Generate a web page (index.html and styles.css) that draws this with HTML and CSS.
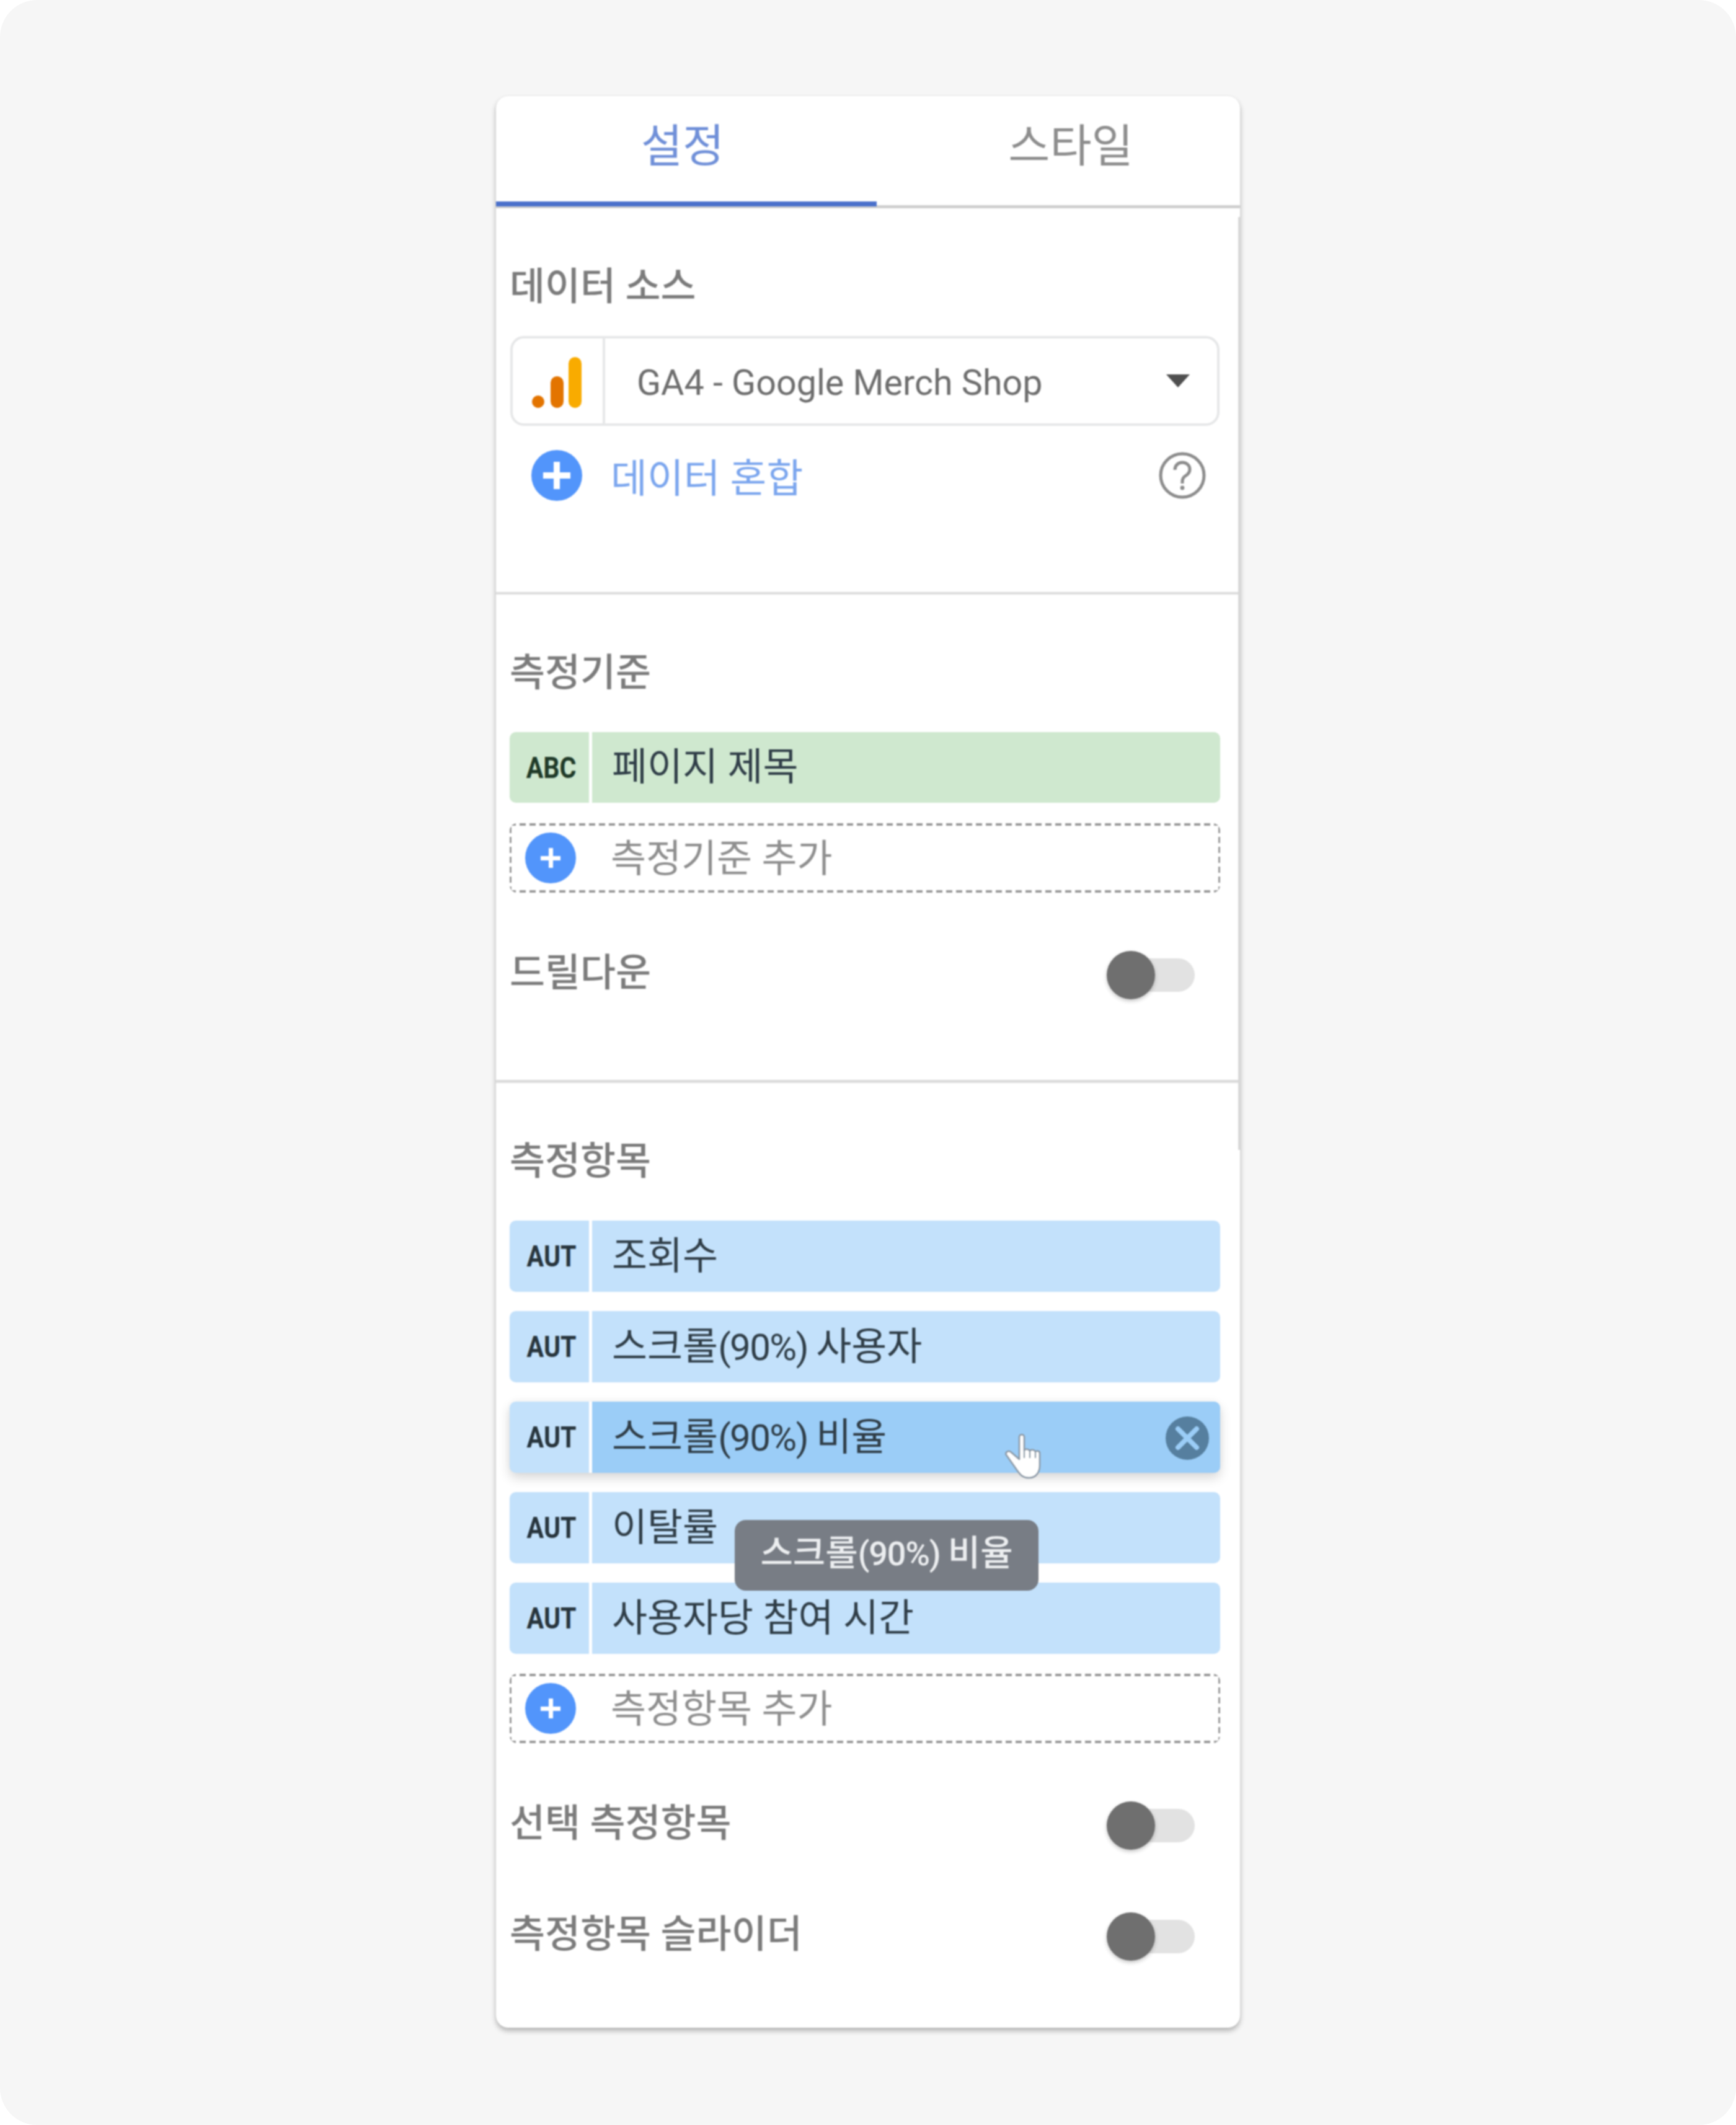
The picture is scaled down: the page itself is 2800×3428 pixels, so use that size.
FILE: index.html
```html
<!DOCTYPE html>
<html lang="ko">
<head>
<meta charset="utf-8">
<title>차트 설정</title>
<link rel="stylesheet" href="styles.css">
</head>
<body>
<main class="frame">
  <div class="card">
    <nav class="tabs">
      <div class="tab tab-active">설정</div>
      <div class="tab tab-idle">스타일</div>
    </nav>
    <div class="panel">
      <section class="section section-source">
        <h2 class="label label-first">데이터 소스</h2>
        <div class="select">
          <div class="select-icon">
            <svg class="ga-logo" viewBox="0 0 80 82" width="80" height="82">
              <circle cx="10" cy="72" r="10" fill="#e37400"/>
              <rect x="30" y="31" width="21" height="51" rx="10.5" fill="#e37400"/>
              <rect x="59" y="0" width="21" height="82" rx="10.5" fill="#f9ab00"/>
            </svg>
          </div>
          <div class="select-text">GA4 - Google Merch Shop</div>
          <div class="caret"></div>
        </div>
        <div class="blend">
          <span class="plus plus-large"></span>
          <span class="blend-text">데이터 혼합</span>
          <svg class="help" viewBox="0 0 80 80" width="80" height="80">
            <circle cx="40" cy="40" r="35" fill="none" stroke="#8c8c8c" stroke-width="5"/>
            <path d="M28 31c0-7 5-12 12-12s12 5 12 11c0 5-3 8-6 10s-6 4-6 10v3" fill="none" stroke="#8c8c8c" stroke-width="5"/>
            <circle cx="40" cy="60" r="3.4" fill="#8c8c8c"/>
          </svg>
        </div>
      </section>

      <section class="section section-dimension">
        <h2 class="label">측정기준</h2>
        <div class="chip chip-green">
          <span class="chip-type"><span class="type-text type-abc">ABC</span></span>
          <span class="chip-name">페이지 제목</span>
        </div>
        <div class="add-row">
          <span class="plus plus-small"></span>
          <span class="add-text">측정기준 추가</span>
        </div>
        <div class="toggle-row toggle-drill">
          <span class="label">드릴다운</span>
          <span class="toggle"></span>
        </div>
      </section>

      <section class="section section-metric">
        <h2 class="label">측정항목</h2>
        <div class="chip-list">
          <div class="chip chip-blue">
            <span class="chip-type"><span class="type-text">AUT</span></span>
            <span class="chip-name">조회수</span>
          </div>
          <div class="chip chip-blue">
            <span class="chip-type"><span class="type-text">AUT</span></span>
            <span class="chip-name"><span>스크롤<span class="nums">(90%) </span>사용자</span></span>
          </div>
          <div class="chip chip-blue chip-hover">
            <span class="chip-type"><span class="type-text">AUT</span></span>
            <span class="chip-name"><span>스크롤<span class="nums">(90%) </span>비율</span></span>
            <svg class="remove" viewBox="0 0 70 70" width="70" height="70">
              <circle cx="35" cy="35" r="35" fill="#567f9f"/>
              <path d="M20 20l30 30M50 20L20 50" stroke="#9bcdf7" stroke-width="8" stroke-linecap="round"/>
            </svg>
            <svg class="cursor" viewBox="0 0 60 76" width="60" height="76">
              <path d="M24 6c0-5 8-5 8 0v22c1-3 8-3 9 1 1-3 8-3 9 1 1-2 7-2 7 2v20c0 11-6 20-17 20-9 0-13-3-18-10L3 35c-2-3 2-8 7-5l14 12z" fill="#fff" stroke="#8b98a5" stroke-width="2.5" stroke-linejoin="round"/>
              <path d="M32 28v12M41 29v11M50 31v9" stroke="#8b98a5" stroke-width="2"/>
            </svg>
          </div>
          <div class="chip chip-blue">
            <span class="chip-type"><span class="type-text">AUT</span></span>
            <span class="chip-name">이탈률</span>
          </div>
          <div class="chip chip-blue">
            <span class="chip-type"><span class="type-text">AUT</span></span>
            <span class="chip-name">사용자당 참여 시간</span>
          </div>
          <div class="tooltip">스크롤<span class="nums">(90%) </span>비율</div>
        </div>
        <div class="add-row add-row-metric">
          <span class="plus plus-small"></span>
          <span class="add-text">측정항목 추가</span>
        </div>
        <div class="toggle-row toggle-first">
          <span class="label">선택 측정항목</span>
          <span class="toggle"></span>
        </div>
        <div class="toggle-row toggle-second">
          <span class="label">측정항목 슬라이더</span>
          <span class="toggle"></span>
        </div>
      </section>
    </div>
  </div>
</main>
</body>
</html>
```

FILE: styles.css
```css
* { box-sizing: border-box; }

html, body {
  margin: 0;
  background: #fff;
}

body {
  font-family: Roboto, "Noto Sans CJK KR", sans-serif;
}

.frame {
  width: 2800px;
  height: 3428px;
  padding-top: 155px;
  border-radius: 60px;
  background: #f6f6f6;
  display: flex;
  justify-content: center;
  align-items: flex-start;
}

.card {
  width: 1200px;
  height: 3116px;
  background: #fff;
  border-radius: 20px;
  box-shadow: 0 5px 8px rgba(0, 0, 0, .28), 0 0 3px rgba(0, 0, 0, .06);
  filter: blur(1px);
}

.tabs {
  display: grid;
  grid-template-columns: 614px 586px;
  height: 181px;
  border-bottom: 5px solid #cfcfcf;
}

.tab {
  height: 178px;
  padding-bottom: 24px;
  font-size: 73px;
  line-height: 162px;
  text-align: center;
}

.tab-active {
  padding-right: 12px;
  color: #6f8fd8;
  border-bottom: 8px solid #4a70cb;
  position: relative;
}

.tab-idle {
  padding-left: 40px;
  color: #8d8d8d;
}

.panel {
  position: relative;
}

.panel::after {
  content: "";
  position: absolute;
  top: 14px;
  right: 0;
  width: 3px;
  height: 1505px;
  background: #d8d8d8;
}

.section {
  padding: 87px 32px 0 22px;
}

.section-source {
  height: 619px;
}

.section-dimension {
  height: 787px;
  border-top: 4px solid #dcdcdc;
}

.section-metric {
  padding-top: 87px;
  border-top: 5px solid #dcdcdc;
}

.label {
  margin: 0;
  font-size: 62px;
  font-weight: 500;
  line-height: 80px;
  color: #7b7b7b;
}

.label-first {
  padding-left: 0;
}

.select {
  display: flex;
  align-items: center;
  width: 1144px;
  height: 145px;
  margin: 39px 0 0 1px;
  border: 4px solid #e6e7e8;
  border-radius: 22px;
}

.select-icon {
  width: 149px;
  height: 100%;
  flex: none;
  border-right: 4px solid #e6e7e8;
  display: flex;
  align-items: center;
  padding: 5px 0 0 31px;
}

.select-text {
  flex: 1;
  padding: 6px 0 0 51px;
  font-size: 57.4px;
  color: #6d6d6d;
}

.caret {
  width: 0;
  height: 0;
  margin-right: 44px;
  border-left: 19px solid transparent;
  border-right: 19px solid transparent;
  border-top: 21px solid #4f4f4f;
}

.blend {
  display: flex;
  align-items: center;
  height: 82px;
  margin-top: 39px;
  padding-left: 35px;
}

.plus {
  flex: none;
  border-radius: 50%;
  width: 82px;
  height: 82px;
  background-color: #5295fb;
  background-repeat: no-repeat;
  background-position: center;
  background-image: linear-gradient(#fff, #fff), linear-gradient(#fff, #fff);
}

.plus-large {
  background-size: 44px 10px, 10px 44px;
}

.plus-small {
  background-size: 32px 7px, 7px 32px;
}

.blend-text {
  flex: 1;
  padding: 0 0 2px 46px;
  font-size: 64px;
  color: #7aa5ee;
}

.help {
  margin-right: 21px;
  flex: none;
}

.chip-list {
  position: relative;
  display: flex;
  flex-direction: column;
  gap: 31px;
  margin-top: 55px;
}

.chip {
  position: relative;
  display: flex;
  align-items: stretch;
  width: 1146px;
  height: 115px;
  border-radius: 10px;
}

.section-dimension .chip {
  height: 114px;
  margin-top: 55px;
}

.chip-green { background: #cfe8cf; }
.chip-blue { background: #c3e1fb; }

.chip-type {
  width: 133px;
  flex: none;
  display: flex;
  align-items: center;
  justify-content: center;
  padding-left: 7px;
  border-right: 5px solid #fff;
}

.type-text {
  display: inline-block;
  font-family: Roboto, sans-serif;
  font-size: 49px;
  font-weight: 700;
  color: #27343c;
  transform: scaleX(.84);
}

.type-abc {
  color: #1f3a28;
}

.chip-name {
  flex: 1;
  padding: 0 0 12px 32px;
  display: flex;
  align-items: center;
  font-size: 62px;
  color: #2f3d47;
}

.nums {
  font-size: 60px;
  letter-spacing: -1.6px;
}

.chip-hover {
  box-shadow: 0 8px 18px rgba(0, 0, 0, .16), 0 -2px 14px rgba(0, 0, 0, .04);
}

.chip-hover .chip-name {
  background: #9bcdf7;
  border-radius: 0 10px 10px 0;
}

.remove {
  position: absolute;
  right: 18px;
  top: 24px;
}

.cursor {
  position: absolute;
  left: 798px;
  top: 51px;
}

.tooltip {
  position: absolute;
  left: 363px;
  top: 483px;
  width: 490px;
  height: 114px;
  border-radius: 18px;
  background: #787d85;
  color: #eceef0;
  font-size: 57px;
  font-weight: 500;
  line-height: 108px;
  text-align: center;
}

.tooltip .nums {
  font-size: 54px;
  letter-spacing: -1.2px;
}

.add-row {
  display: flex;
  align-items: center;
  width: 1146px;
  height: 112px;
  margin-top: 33px;
  padding-left: 25px;
  border-radius: 12px;
  background-image:
    repeating-linear-gradient(90deg, #999 0 10px, transparent 10px 16px),
    repeating-linear-gradient(90deg, #999 0 10px, transparent 10px 16px),
    repeating-linear-gradient(0deg, #999 0 10px, transparent 10px 16px),
    repeating-linear-gradient(0deg, #999 0 10px, transparent 10px 16px);
  background-size: 100% 4px, 100% 4px, 3px 100%, 3px 100%;
  background-position: top, bottom, left, right;
  background-repeat: no-repeat;
}

.add-row-metric {
  margin-top: 32px;
}

.add-text {
  padding: 0 0 8px 56px;
  font-size: 62px;
  color: #8e8e8e;
}

.toggle-row {
  display: flex;
  align-items: center;
  justify-content: space-between;
  height: 80px;
  padding-right: 41px;
}

.toggle-drill {
  margin-top: 90px;
}

.toggle-first {
  margin-top: 90px;
}

.toggle-second {
  margin-top: 99px;
}

.toggle {
  position: relative;
  width: 142px;
  height: 54px;
  margin-top: 6px;
  border-radius: 27px;
  background: #e2e2e2;
}

.toggle::before {
  content: "";
  position: absolute;
  left: 0;
  top: -12px;
  width: 78px;
  height: 78px;
  border-radius: 50%;
  background: #6f6f6f;
  box-shadow: 0 3px 6px rgba(0, 0, 0, .22);
}
```
